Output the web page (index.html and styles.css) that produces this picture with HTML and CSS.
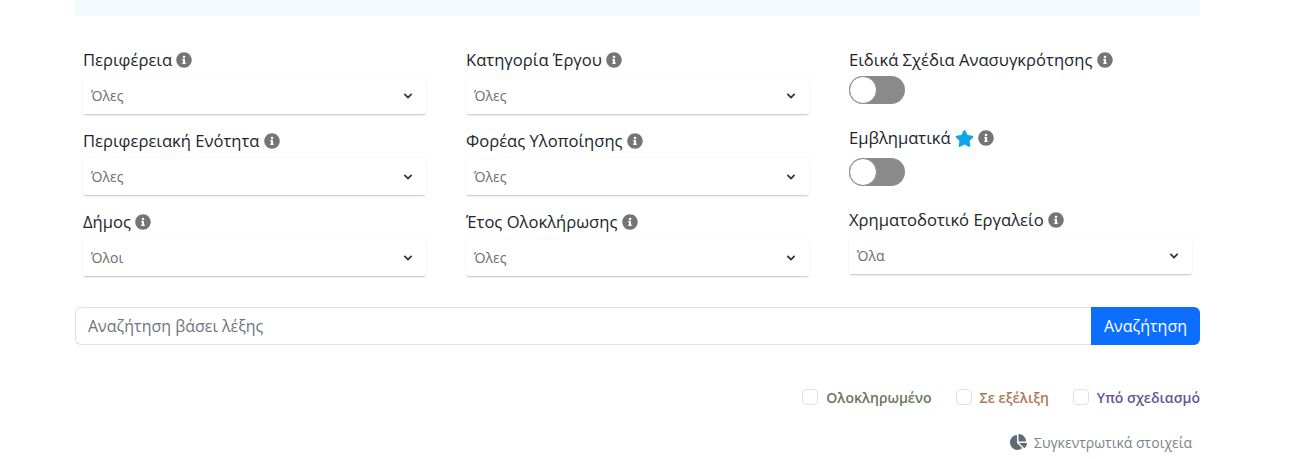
FILE: index.html
```html
<!DOCTYPE html>
<html lang="el">
<head>
<meta charset="utf-8">
<title>Αναζήτηση</title>
<link rel="stylesheet" href="styles.css">
</head>
<body>
<svg class="defs" width="0" height="0" aria-hidden="true">
  <symbol id="info" viewBox="0 0 512 512"><path d="M256 8C119 8 8 119 8 256s111 248 248 248 248-111 248-248S393 8 256 8zm0 110c23.200 0 42 18.800 42 42s-18.800 42-42 42-42-18.800-42-42 18.800-42 42-42zm56 254c0 6.600-5.400 12-12 12h-88c-6.600 0-12-5.400-12-12v-24c0-6.600 5.400-12 12-12h12v-64h-12c-6.600 0-12-5.400-12-12v-24c0-6.600 5.400-12 12-12h64c6.600 0 12 5.400 12 12v100h12c6.600 0 12 5.400 12 12v24z"/></symbol>
</svg>
<main class="page">
  <div class="banner"></div>
  <form class="filters">
    <div class="col">
      <div class="field">
        <div class="label">Περιφέρεια <svg class="info"><use href="#info"/></svg></div>
        <select class="select"><option>Όλες</option></select>
      </div>
      <div class="field">
        <div class="label">Περιφερειακή Ενότητα <svg class="info"><use href="#info"/></svg></div>
        <select class="select"><option>Όλες</option></select>
      </div>
      <div class="field">
        <div class="label">Δήμος <svg class="info"><use href="#info"/></svg></div>
        <select class="select"><option>Όλοι</option></select>
      </div>
    </div>
    <div class="col">
      <div class="field">
        <div class="label">Κατηγορία Έργου <svg class="info"><use href="#info"/></svg></div>
        <select class="select"><option>Όλες</option></select>
      </div>
      <div class="field">
        <div class="label">Φορέας Υλοποίησης <svg class="info"><use href="#info"/></svg></div>
        <select class="select"><option>Όλες</option></select>
      </div>
      <div class="field">
        <div class="label">Έτος Ολοκλήρωσης <svg class="info"><use href="#info"/></svg></div>
        <select class="select"><option>Όλες</option></select>
      </div>
    </div>
    <div class="col">
      <div class="field-switch">
        <div class="label">Ειδικά Σχέδια Ανασυγκρότησης <svg class="info"><use href="#info"/></svg></div>
        <span class="switch"><span class="knob"></span></span>
      </div>
      <div class="field-switch second">
        <div class="label">Εμβληματικά <svg class="star" viewBox="0 0 576 512"><path d="M259.300 17.800L194 150.200 47.900 171.500c-26.200 3.800-36.700 36.100-17.700 54.600l105.700 103-25 145.500c-4.500 26.300 23.200 46 46.400 33.700L288 439.600l130.700 68.700c23.200 12.200 50.900-7.400 46.400-33.700l-25-145.500 105.700-103c19-18.500 8.500-50.800-17.700-54.600L382 150.200 316.700 17.800c-11.700-23.600-45.600-23.900-57.400 0z"/></svg> <svg class="info"><use href="#info"/></svg></div>
        <span class="switch"><span class="knob"></span></span>
      </div>
      <div class="field">
        <div class="label">Χρηματοδοτικό Εργαλείο <svg class="info"><use href="#info"/></svg></div>
        <select class="select"><option>Όλα</option></select>
      </div>
    </div>
  </form>
  <div class="search">
    <input class="search-input" type="text" placeholder="Αναζήτηση βάσει λέξης">
    <button class="search-btn" type="button">Αναζήτηση</button>
  </div>
  <div class="statuses">
    <label class="status"><span class="check"></span><span class="done">Ολοκληρωμένο</span></label>
    <label class="status"><span class="check"></span><span class="progress">Σε εξέλιξη</span></label>
    <label class="status"><span class="check"></span><span class="planned">Υπό σχεδιασμό</span></label>
  </div>
  <div class="summary">
    <svg class="pie" viewBox="0 0 544 512"><path d="M527.790 288H290.500l158.030 158.030c6.040 6.040 15.980 6.530 22.190.68 38.700-36.460 65.320-85.610 73.130-140.860 1.340-9.460-6.510-17.850-16.060-17.850zm-15.830-64.800C503.720 103.740 408.260 8.280 288.800.04 279.680-.59 272 7.100 272 16.240V240h223.770c9.140 0 16.820-7.680 16.190-16.800zM224 288V50.710c0-9.550-8.390-17.400-17.840-16.060C86.990 51.490-4.100 155.600.14 280.370 4.500 408.510 114.830 513.590 243.030 511.980c50.400-.63 96.970-16.870 135.260-44.030 7.900-5.600 8.420-17.230 1.570-24.080L224 288z"/></svg>
    <span>Συγκεντρωτικά στοιχεία</span>
  </div>
</main>
</body>
</html>
```
FILE: styles.css
```css
* { box-sizing: border-box; }
html, body { margin: 0; padding: 0; background: #fff; }
body { font-family: "Open Sans", "Noto Sans", sans-serif; color: #212529; overflow: hidden; height: 459px; }
.defs { position: absolute; }
.page { width: 1125px; margin-left: 75px; }
.banner { height: 16px; background: #f4fbff; }
.filters { display: grid; grid-template-columns: repeat(3, 383px); padding: 32px 0 0 8px; height: 291px; }
.col { display: flex; flex-direction: column; }
.field { display: flex; flex-direction: column; height: 81px; }
.label { height: 24px; font-size: 16.6px; font-weight: 500; line-height: 24px; white-space: nowrap; color: #212529; }
.info { width: 16px; height: 16px; fill: #757578; vertical-align: -2px; }
.star { width: 19px; height: 17px; fill: #0ea5e9; vertical-align: -3px; }
.select {
  appearance: none;
  display: block;
  width: 343px;
  height: 37px;
  margin-top: 5px;
  padding: 0 32px 0 8px;
  border: 0;
  border-radius: 2px;
  background: #fff url("data:image/svg+xml,%3Csvg xmlns='http://www.w3.org/2000/svg' viewBox='0 0 16 16'%3E%3Cpath fill='none' stroke='%23343a40' stroke-linecap='round' stroke-linejoin='round' stroke-width='3' d='M3 5.500l5 5 5-5'/%3E%3C/svg%3E") no-repeat right 13px center / 10px 10px;
  box-shadow: 0 2px 2px -1px rgba(0, 0, 0, .22), 0 0 2px rgba(0, 0, 0, .08);
  font: 400 14px "Open Sans", sans-serif;
  color: #6c6c6c;
}
.field-switch { display: flex; flex-direction: column; height: 78px; }
.switch { display: flex; align-items: center; width: 56px; height: 28px; margin-top: 4px; border-radius: 14px; background: #8a8a8a; }
.knob { width: 28px; height: 28px; border-radius: 50%; background: #fff; border: 1px solid #8a8a8a; }
.field-switch.second { height: 82px; }
.field-switch.second .switch { margin-top: 8px; }
.search { display: flex; height: 38px; }
.search-input { flex: 1; min-width: 0; height: 38px; padding: 0 12px; border: 1px solid #dee2e6; border-right: 0; border-radius: 6px 0 0 6px; font: 400 16px "Open Sans", sans-serif; color: #212529; outline: none; }
.search-input::placeholder { color: #6c757d; opacity: 1; }
.search-btn { width: 109px; height: 38px; border: 0; border-radius: 0 6px 6px 0; background: #0d6efd; color: #fff; font: 400 16px "Open Sans", sans-serif; }
.statuses { display: flex; justify-content: flex-end; gap: 24px; margin-top: 43px; height: 18px; font-size: 14px; font-weight: 600; }
.status { display: flex; align-items: center; gap: 8px; }
.check { width: 16px; height: 16px; border: 1px solid #dee2e6; border-radius: 4px; background: #fff; }
.done { color: #66785c; }
.progress { color: #ae7658; }
.planned { color: #665595; }
.summary { display: flex; justify-content: flex-end; align-items: center; gap: 7px; margin-top: 26px; padding-right: 8px; height: 20px; font-size: 14px; color: #7a838b; }
.pie { width: 17px; height: 16px; fill: #5f6b75; }
```
